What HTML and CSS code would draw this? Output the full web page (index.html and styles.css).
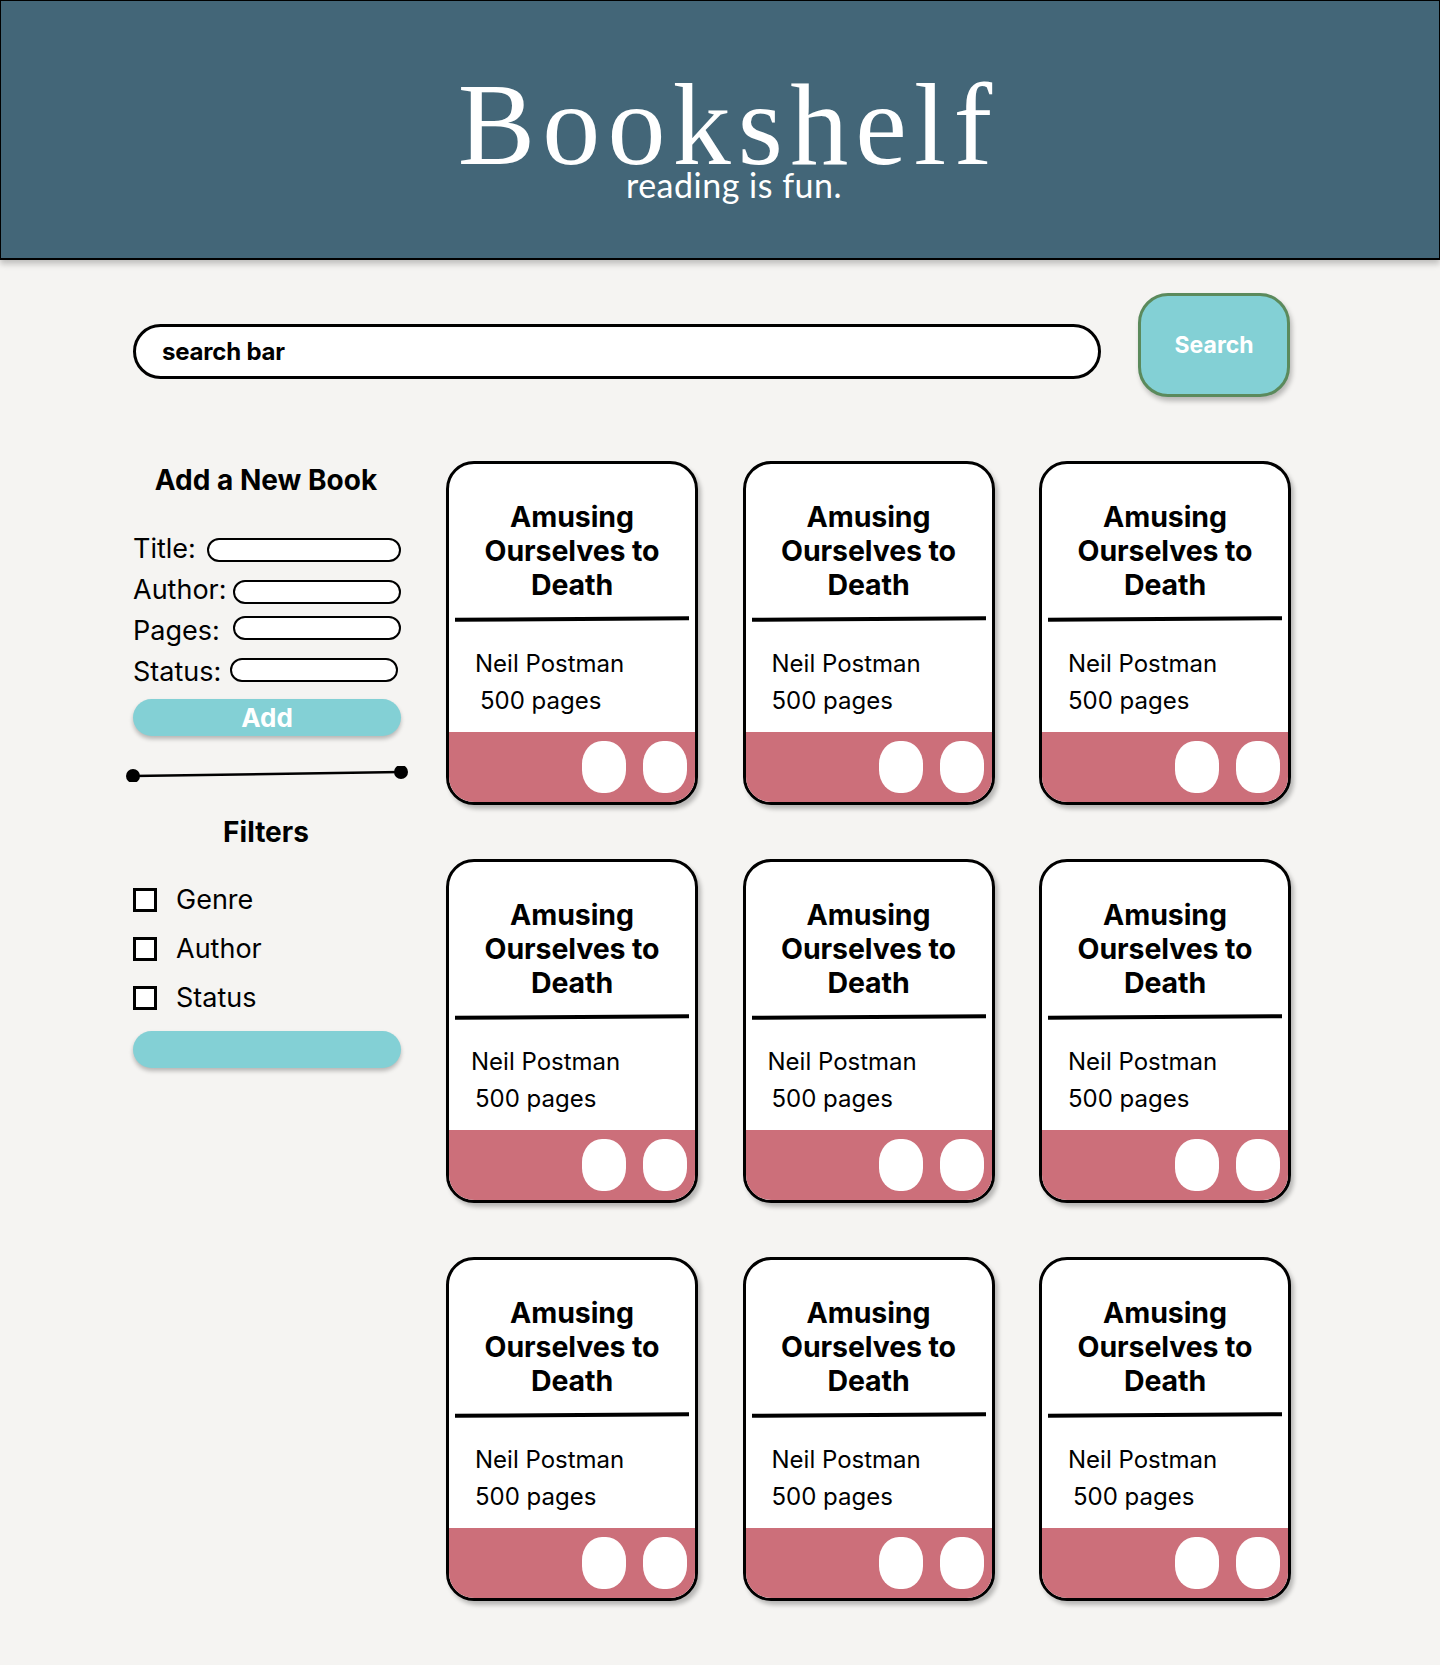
FILE: index.html
```html
<!DOCTYPE html>
<html lang="en">
<head>
<meta charset="utf-8">
<title>Bookshelf</title>
<link rel="stylesheet" href="styles.css">
</head>
<body>
<header class="masthead">
  <h1 class="brand">Bookshelf</h1>
  <p class="tagline">reading is fun.</p>
</header>

<main class="page">
  <div class="search-row">
    <div class="search-field">search bar</div>
    <button class="search-btn">Search</button>
  </div>

  <div class="content">
    <aside class="sidebar">
      <h2 class="side-title">Add a New Book</h2>
      <div class="form">
        <div class="form-row"><span class="label">Title:</span><span class="field field-title"></span></div>
        <div class="form-row"><span class="label">Author:</span><span class="field field-author"></span></div>
        <div class="form-row"><span class="label">Pages:</span><span class="field field-pages"></span></div>
        <div class="form-row"><span class="label">Status:</span><span class="field field-status"></span></div>
      </div>
      <button class="add-btn">Add</button>

      <div class="slider">
        <svg class="slider-svg" width="284" height="16" viewBox="0 0 284 16">
          <line x1="8" y1="10" x2="276" y2="6" stroke="#000" stroke-width="2.5"/>
          <circle cx="8" cy="10" r="7" fill="#000"/>
          <circle cx="276" cy="6" r="7" fill="#000"/>
        </svg>
      </div>

      <h2 class="side-title filters-title">Filters</h2>
      <ul class="filters">
        <li class="filter"><span class="check"></span>Genre</li>
        <li class="filter"><span class="check"></span>Author</li>
        <li class="filter"><span class="check"></span>Status</li>
      </ul>
      <button class="filter-btn"></button>
    </aside>

    <section class="grid">
      <article class="card">
        <h3 class="card-title">Amusing Ourselves to Death</h3>
        <hr class="card-rule">
        <p class="card-meta">Neil Postman</p>
        <p class="card-meta pages">500 pages</p>
        <div class="card-foot"><span class="pill"></span><span class="pill"></span></div>
      </article>
      <article class="card">
        <h3 class="card-title">Amusing Ourselves to Death</h3>
        <hr class="card-rule">
        <p class="card-meta">Neil Postman</p>
        <p class="card-meta">500 pages</p>
        <div class="card-foot"><span class="pill"></span><span class="pill"></span></div>
      </article>
      <article class="card">
        <h3 class="card-title">Amusing Ourselves to Death</h3>
        <hr class="card-rule">
        <p class="card-meta">Neil Postman</p>
        <p class="card-meta">500 pages</p>
        <div class="card-foot"><span class="pill"></span><span class="pill"></span></div>
      </article>
      <article class="card">
        <h3 class="card-title">Amusing Ourselves to Death</h3>
        <hr class="card-rule">
        <p class="card-meta shift-left">Neil Postman</p>
        <p class="card-meta">500 pages</p>
        <div class="card-foot"><span class="pill"></span><span class="pill"></span></div>
      </article>
      <article class="card">
        <h3 class="card-title">Amusing Ourselves to Death</h3>
        <hr class="card-rule">
        <p class="card-meta shift-left">Neil Postman</p>
        <p class="card-meta">500 pages</p>
        <div class="card-foot"><span class="pill"></span><span class="pill"></span></div>
      </article>
      <article class="card">
        <h3 class="card-title">Amusing Ourselves to Death</h3>
        <hr class="card-rule">
        <p class="card-meta">Neil Postman</p>
        <p class="card-meta">500 pages</p>
        <div class="card-foot"><span class="pill"></span><span class="pill"></span></div>
      </article>
      <article class="card">
        <h3 class="card-title">Amusing Ourselves to Death</h3>
        <hr class="card-rule">
        <p class="card-meta">Neil Postman</p>
        <p class="card-meta">500 pages</p>
        <div class="card-foot"><span class="pill"></span><span class="pill"></span></div>
      </article>
      <article class="card">
        <h3 class="card-title">Amusing Ourselves to Death</h3>
        <hr class="card-rule">
        <p class="card-meta">Neil Postman</p>
        <p class="card-meta">500 pages</p>
        <div class="card-foot"><span class="pill"></span><span class="pill"></span></div>
      </article>
      <article class="card">
        <h3 class="card-title">Amusing Ourselves to Death</h3>
        <hr class="card-rule">
        <p class="card-meta">Neil Postman</p>
        <p class="card-meta pages">500 pages</p>
        <div class="card-foot"><span class="pill"></span><span class="pill"></span></div>
      </article>
    </section>
  </div>
</main>
</body>
</html>
```

FILE: styles.css
```css
* { box-sizing: border-box; }

html, body {
  margin: 0;
  padding: 0;
}

body {
  background: #f5f4f2;
  font-family: Inter, "Noto Sans", sans-serif;
  color: #000;
  min-height: 1665px;
}

/* ---------- header ---------- */
.masthead {
  height: 260px;
  background: #436678;
  border: 1px solid #000;
  border-bottom-width: 2px;
  box-shadow: 0 4px 6px rgba(0, 0, 0, 0.22);
  display: flex;
  flex-direction: column;
  align-items: center;
  padding-top: 76px;
}

.brand {
  margin: 0;
  font-family: "Liberation Serif", "Times New Roman", serif;
  font-weight: 400;
  font-size: 116px;
  line-height: 96px;
  letter-spacing: 7.2px;
  color: #fff;
  padding-left: 17px;
}

.tagline {
  margin: 0;
  padding-left: 28px;
  font-family: Lato, "Open Sans", sans-serif;
  font-size: 34px;
  line-height: 24px;
  letter-spacing: 0.5px;
  color: #fff;
}

/* ---------- page ---------- */
.page {
  padding-left: 133px;
  width: 1290px;
}

.search-row {
  display: flex;
  align-items: flex-start;
  gap: 37px;
  margin-top: 33px;
}

.search-field {
  width: 969px;
  height: 55px;
  margin-top: 31px;
  background: #fff;
  border: 3px solid #000;
  border-radius: 28px;
  padding-left: 26px;
  font-weight: 700;
  font-size: 24px;
  line-height: 49px;
  letter-spacing: -0.2px;
}

.search-btn {
  width: 152px;
  height: 104px;
  background: #83d0d5;
  border: 3px solid #5b8a5c;
  border-radius: 30px;
  box-shadow: 2px 4px 5px rgba(0, 0, 0, 0.25);
  color: #fff;
  font-family: Inter, sans-serif;
  font-weight: 700;
  font-size: 23px;
  padding: 0;
}

/* ---------- content ---------- */
.content {
  display: flex;
  gap: 45px;
  margin-top: 64px;
}

.sidebar {
  width: 268px;
  flex: none;
  padding-top: 3px;
}

.side-title {
  margin: 0;
  text-align: center;
  font-weight: 700;
  font-size: 28px;
  line-height: 33px;
  padding-right: 2px;
}

.form {
  margin-top: 31px;
}

.form-row {
  display: flex;
  align-items: center;
  justify-content: space-between;
  height: 41px;
}

.label {
  font-size: 27px;
  font-weight: 400;
  line-height: 41px;
}

.field {
  height: 24px;
  background: #fff;
  border: 2px solid #000;
  border-radius: 12px;
}

.field-title { width: 194px; margin-top: 3px; }
.field-author { width: 168px; margin-top: 5px; }
.field-pages { width: 168px; margin-top: -5px; }
.field-status { width: 168px; margin-right: 3px; margin-top: -3px; }

.add-btn {
  display: block;
  width: 268px;
  height: 37px;
  margin-top: 7px;
  background: #83d0d5;
  border: 0;
  border-radius: 19px;
  box-shadow: 0 3px 4px rgba(0, 0, 0, 0.25);
  color: #fff;
  font-family: Inter, sans-serif;
  font-weight: 700;
  font-size: 26px;
  line-height: 37px;
  padding: 0;
}

.slider {
  margin-top: 30px;
  margin-left: -8px;
  height: 16px;
}

.slider-svg { display: block; }

.filters-title {
  margin-top: 34px;
}

.filters {
  list-style: none;
  margin: 26px 0 0 0;
  padding: 0;
}

.filter {
  display: flex;
  align-items: center;
  gap: 19px;
  height: 49px;
  font-size: 27px;
}

.check {
  width: 24px;
  height: 24px;
  background: #fff;
  border: 3px solid #000;
  flex: none;
}

.filter-btn {
  display: block;
  width: 268px;
  height: 37px;
  margin-top: 9px;
  background: #83d0d5;
  border: 0;
  border-radius: 19px;
  box-shadow: 0 3px 4px rgba(0, 0, 0, 0.25);
  padding: 0;
}

/* ---------- cards ---------- */
.grid {
  display: grid;
  grid-template-columns: repeat(3, 252px);
  grid-auto-rows: 344px;
  column-gap: 44.5px;
  row-gap: 54px;
}

.card {
  display: flex;
  flex-direction: column;
  background: #fff;
  border: 3px solid #000;
  border-radius: 28px;
  overflow: hidden;
  box-shadow: 3px 4px 4px rgba(0, 0, 0, 0.25);
}

.card-title {
  margin: 0;
  padding: 36px 10px 0 10px;
  text-align: center;
  font-weight: 700;
  font-size: 28.5px;
  line-height: 34px;
  letter-spacing: -0.1px;
}

.card-rule {
  margin: 15px 6px 0 6px;
  height: 4px;
  border: 0;
  background: #000;
  transform: rotate(-0.35deg);
}

.card-meta {
  margin: 0;
  padding-left: 26px;
  font-size: 24px;
  line-height: 37px;
}

.card-meta:first-of-type { margin-top: 24px; }

.card-meta.pages { padding-left: 31px; }
.card-meta.shift-left { padding-left: 22px; }

.card-foot {
  margin-top: auto;
  height: 70px;
  background: #cc6f7a;
  display: flex;
  justify-content: flex-end;
  align-items: center;
  gap: 17px;
  padding-right: 8px;
}

.pill {
  width: 44px;
  height: 52px;
  background: #fff;
  border-radius: 20px / 23px;
}
```
